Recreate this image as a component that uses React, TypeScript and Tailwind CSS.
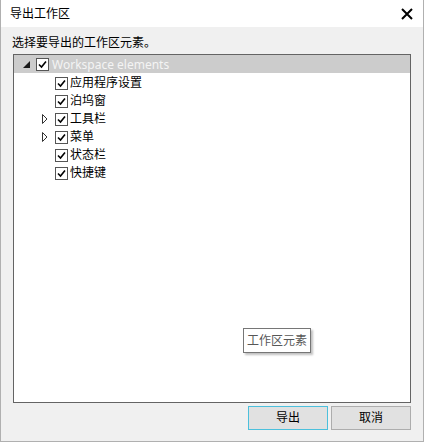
import React from "react";

const FONT = { fontFamily: '"Noto Sans", "Noto Sans CJK SC", sans-serif' };

const CHILDREN = [
  { label: "应用程序设置", expandable: false },
  { label: "泊坞窗", expandable: false },
  { label: "工具栏", expandable: true },
  { label: "菜单", expandable: true },
  { label: "状态栏", expandable: false },
  { label: "快捷键", expandable: false },
];

function Check() {
  return (
    <span className="flex h-[13px] w-[13px] shrink-0 items-center justify-center border border-[#555555] bg-white">
      <svg width="9" height="9" viewBox="0 0 9 9">
        <polyline points="1,4.5 3.5,7 8,1.5" fill="none" stroke="#000" strokeWidth="1.6" />
      </svg>
    </span>
  );
}

function Row({ label, expandable }: { label: string; expandable: boolean }) {
  return (
    <div className="flex h-[18px] items-center pl-[28px]">
      <span className="flex w-[13px] shrink-0 items-center">
        {expandable && (
          <svg width="6" height="10" viewBox="0 0 6 10">
            <polygon points="0.5,0.5 5,5 0.5,9.5" fill="none" stroke="#333" strokeWidth="1" />
          </svg>
        )}
      </span>
      <Check />
      <span className="ml-[2px] text-[12px] leading-[18px] text-black">{label}</span>
    </div>
  );
}

export default function App() {
  return (
    <div
      className="flex h-[442px] w-[424px] flex-col border-x border-b border-[#b0b0b0] bg-[#f0f0f0]"
      style={FONT}
    >
      <div className="flex h-[27px] shrink-0 items-center justify-between bg-white pl-[9px] pr-[10px]">
        <span className="text-[12px] text-black">导出工作区</span>
        <svg width="12" height="12" viewBox="0 0 12 12">
          <path d="M1 1 L11 11 M11 1 L1 11" stroke="#000" strokeWidth="2" />
        </svg>
      </div>
      <div className="flex flex-1 flex-col px-[12px] pt-[7px]">
        <div className="-ml-px h-[18px] text-[12px] leading-[18px] text-black">选择要导出的工作区元素。</div>
        <div className="relative mt-[2px] h-[349px] border border-[#646464] bg-white">
          <div className="flex h-[18px] items-center bg-[#cccccc] pl-[9px] pt-px">
            <span className="flex w-[13px] shrink-0 items-center">
              <svg width="7" height="7" viewBox="0 0 7 7">
                <polygon points="7,0 7,7 0,7" fill="#1a1a1a" />
              </svg>
            </span>
            <Check />
            <span className="ml-[3px] text-[12px] leading-[18px] text-[#f4f4f4]">Workspace elements</span>
          </div>
          <div className="pt-px">
            {CHILDREN.map((c) => (
              <Row key={c.label} label={c.label} expandable={c.expandable} />
            ))}
          </div>
          <div className="absolute left-[229px] top-[273px] flex h-[25px] w-[68px] items-center justify-center border border-[#767676] bg-white text-[12px] text-[#575757] shadow-[2px_2px_2px_rgba(0,0,0,0.25)]">
            工作区元素
          </div>
        </div>
        <div className="mt-[3px] flex justify-end gap-[3px]">
          <button className="h-[24px] w-[80px] border border-[#4cc0dc] bg-[#e1e1e1] text-[12px] text-black">导出</button>
          <button className="h-[24px] w-[80px] border border-[#adadad] bg-[#e1e1e1] text-[12px] text-black">取消</button>
        </div>
      </div>
    </div>
  );
}
